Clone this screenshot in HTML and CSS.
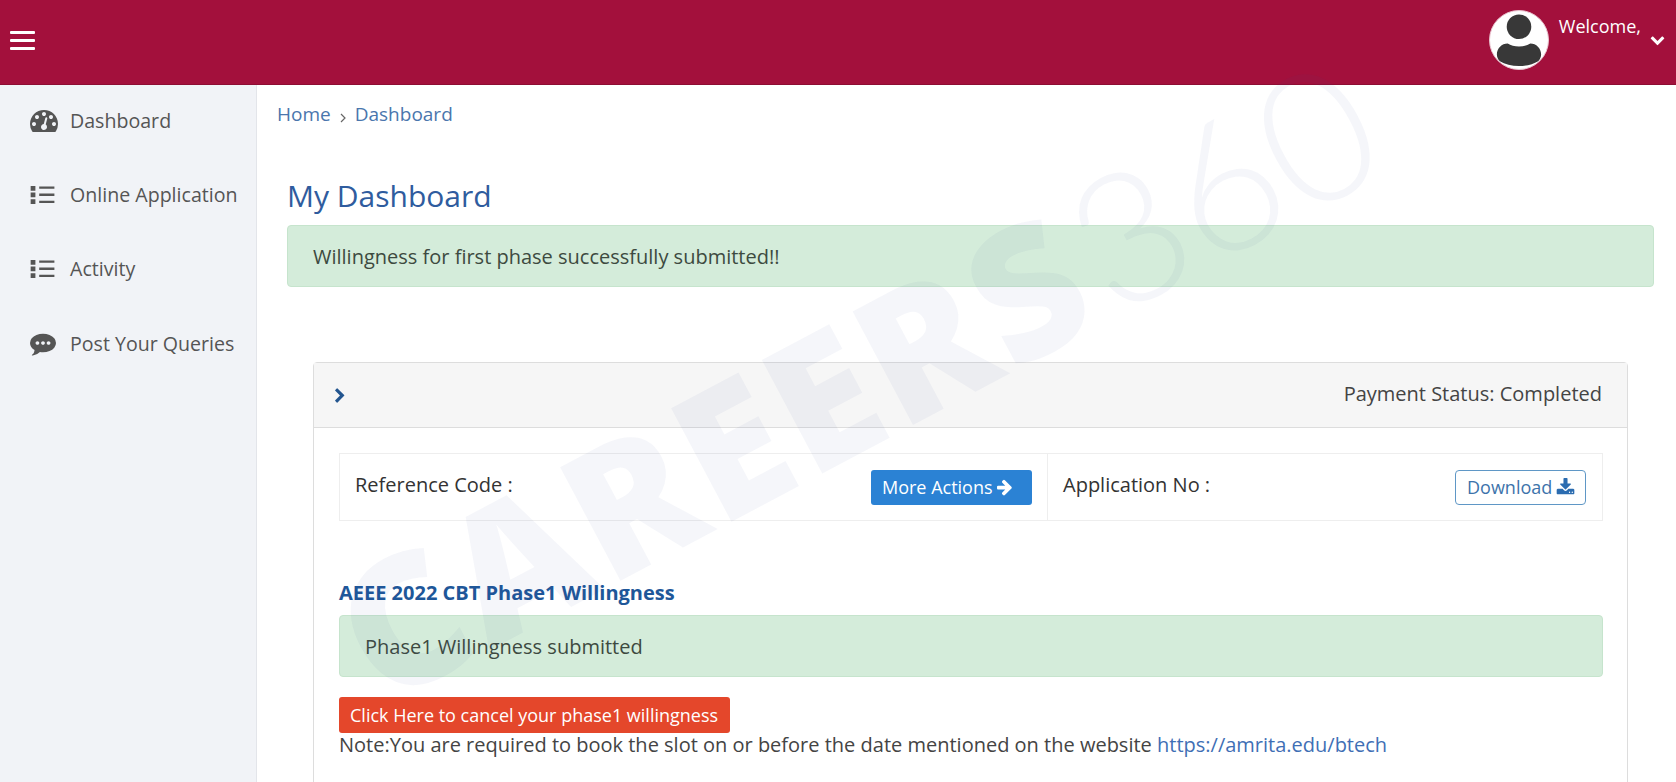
FILE: index.html
```html
<!DOCTYPE html>
<html lang="en">
<head>
<meta charset="utf-8">
<title>My Dashboard</title>
<link rel="stylesheet" href="styles.css">
</head>
<body>
<div class="page">
  <header class="topbar">
    <div class="burger"><span></span><span></span><span></span></div>
    <div class="user">
      <div class="avatar">
        <svg viewBox="0 0 59 59" width="58" height="58"><circle cx="29.500" cy="16" r="12.500" fill="#383838"/><path d="M7 44c0-6 5-11 11-11 3 2 7 3 11.500 3s8.500-1 11.500-3c6 0 11 5 11 11 0 3-1 5-3 7-5 3-12 5-19.500 5s-14.500-2-19.500-5c-2-2-3-4-3-7z" fill="#383838"/></svg>
      </div>
      <span class="welcome">Welcome,</span>
      <svg class="caret" viewBox="0 0 1792 1792" width="15" height="15"><path fill="#fff" d="M1683 808l-742 741q-19 19-45 19t-45-19l-742-741q-19-19-19-45.500t19-45.500l166-165q19-19 45-19t45 19l531 531 531-531q19-19 45-19t45 19l166 165q19 19 19 45.500t-19 45.500z"/></svg>
    </div>
  </header>
  <div class="layout">
    <nav class="sidebar">
      <a class="nav-item">
        <svg class="nav-icon icon-gauge" viewBox="0 0 1792 1792" width="28" height="28"><path d="M384 1152q0-53-37.500-90.500t-90.500-37.500-90.500 37.500-37.500 90.500 37.500 90.500 90.500 37.500 90.500-37.500 37.500-90.500zm192-448q0-53-37.500-90.500t-90.500-37.500-90.500 37.500-37.500 90.500 37.500 90.500 90.500 37.500 90.500-37.500 37.500-90.500zm428 481l101-382q6-26-7.500-48.500t-38.500-29.500-48 6.500-30 39.500l-101 382q-60 5-107 43.500t-63 98.500q-20 77 20 146t117 89 146-20 89-117q16-60-6-117t-72-91zm660-33q0-53-37.500-90.500t-90.500-37.500-90.500 37.500-37.500 90.500 37.500 90.500 90.500 37.500 90.500-37.500 37.500-90.500zm-640-640q0-53-37.500-90.500t-90.500-37.500-90.500 37.500-37.500 90.500 37.500 90.500 90.500 37.500 90.500-37.500 37.500-90.500zm448 192q0-53-37.500-90.500t-90.500-37.500-90.500 37.500-37.500 90.500 37.500 90.500 90.500 37.500 90.500-37.500 37.500-90.500zm320 448q0 261-141 483-19 29-54 29h-1402q-35 0-54-29-141-221-141-483 0-182 71-348t191-286 286-191 348-71 348 71 286 191 191 286 71 348z"/></svg>
        <span>Dashboard</span>
      </a>
      <a class="nav-item">
        <svg class="nav-icon" viewBox="0 0 26 20" width="26" height="19"><path d="M0 1h5v5H0zM0 8h5v5H0zM0 15h5v5H0zM9 1.500h16v2.500H9zM9 9h16v2.500H9zM9 16.500h16V19H9z"/></svg>
        <span>Online Application</span>
      </a>
      <a class="nav-item">
        <svg class="nav-icon" viewBox="0 0 26 20" width="26" height="19"><path d="M0 1h5v5H0zM0 8h5v5H0zM0 15h5v5H0zM9 1.500h16v2.500H9zM9 9h16v2.500H9zM9 16.500h16V19H9z"/></svg>
        <span>Activity</span>
      </a>
      <a class="nav-item">
        <svg class="nav-icon" viewBox="0 0 1792 1792" width="26" height="26"><path d="M640 896q0-53-37.500-90.500t-90.500-37.500-90.500 37.500-37.500 90.500 37.500 90.500 90.500 37.500 90.500-37.500 37.500-90.500zm384 0q0-53-37.500-90.500t-90.500-37.500-90.500 37.500-37.500 90.500 37.500 90.500 90.500 37.500 90.500-37.500 37.500-90.500zm384 0q0-53-37.500-90.500t-90.500-37.500-90.500 37.500-37.500 90.500 37.500 90.500 90.500 37.500 90.500-37.500 37.500-90.500zm384 0q0 174-120 321.500t-326 233-450 85.500q-110 0-211-18-173 173-435 229-52 10-86 13-12 1-22-6t-13-18q-4-15 20-37 5-5 23.500-21.500t25.500-23.500 23.500-25.500 24-31.500 20.500-37 20-48 14.500-57.500 12.500-72.500q-146-90-229.500-216.500t-83.500-269.500q0-174 120-321.500t326-233 450-85.500 450 85.500 326 233 120 321.500z"/></svg>
        <span>Post Your Queries</span>
      </a>
    </nav>
    <main class="main">
      <div class="breadcrumb">
        <a>Home</a>
        <svg class="crumb-sep" viewBox="0 0 8 12" width="8" height="12"><path d="M2 2l4 4-4 4" fill="none" stroke="#666" stroke-width="1.200"/></svg>
        <a>Dashboard</a>
      </div>
      <h1 class="page-title">My Dashboard</h1>
      <div class="alert alert-top">Willingness for first phase successfully submitted!!</div>
      <section class="card">
        <div class="card-head">
          <svg class="chevron" viewBox="0 0 1792 1792" width="16" height="16"><path fill="#23558f" d="M1363 877l-742 742q-19 19-45 19t-45-19l-166-166q-19-19-19-45t19-45l531-531-531-531q-19-19-19-45t19-45l166-166q19-19 45-19t45 19l742 742q19 19 19 45t-19 45z"/></svg>
          <span>Payment Status: Completed</span>
        </div>
        <div class="card-body">
          <div class="info-table">
            <div class="info-cell info-left">
              <span>Reference Code :</span>
              <a class="btn btn-blue">More Actions
                <svg viewBox="0 0 1792 1792" width="18" height="18"><path fill="#fff" d="M1472 960q0 54-37 91l-651 651q-39 37-91 37-51 0-90-37l-75-75q-38-38-38-91t38-91l293-293h-704q-52 0-84.500-37.500t-32.500-90.500v-128q0-53 32.500-90.500t84.500-37.500h704l-293-294q-38-36-38-90t38-90l75-75q38-38 90-38 53 0 91 38l651 651q37 35 37 90z"/></svg>
              </a>
            </div>
            <div class="info-cell info-right">
              <span>Application No :</span>
              <a class="btn btn-outline">Download
                <svg viewBox="0 0 1792 1792" width="19" height="19"><path fill="#2b6cb0" d="M1344 1344q0-26-19-45t-45-19-45 19-19 45 19 45 45 19 45-19 19-45zm256 0q0-26-19-45t-45-19-45 19-19 45 19 45 45 19 45-19 19-45zm128-224v320q0 40-28 68t-68 28h-1472q-40 0-68-28t-28-68v-320q0-40 28-68t68-28h465l135 136q58 56 136 56t136-56l136-136h464q40 0 68 28t28 68zm-325-569q17 41-14 70l-448 448q-18 19-45 19t-45-19l-448-448q-31-29-14-70 17-39 59-39h256v-448q0-26 19-45t45-19h256q26 0 45 19t19 45v448h256q42 0 59 39z"/></svg>
              </a>
            </div>
          </div>
          <h2 class="section-title">AEEE 2022 CBT Phase1 Willingness</h2>
          <div class="alert alert-inner">Phase1 Willingness submitted</div>
          <a class="btn btn-red">Click Here to cancel your phase1 willingness</a>
          <p class="note">Note:You are required to book the slot on or before the date mentioned on the website <a href="#">https://amrita.edu/btech</a></p>
        </div>
      </section>
      <div class="watermark"><span class="wm-bold">CAREERS</span><span class="wm-thin">360</span></div>
    </main>
  </div>
</div>
</body>
</html>
```
FILE: styles.css
```css
* { box-sizing: border-box; }
html, body { margin: 0; padding: 0; }
body {
  font-family: "Open Sans", "Noto Sans", sans-serif;
  font-size: 20px;
  color: #444;
  background: #fff;
}
a { text-decoration: none; }
.page {
  height: 100vh;
  display: flex;
  flex-direction: column;
  overflow: hidden;
}
.topbar {
  flex: 0 0 85px;
  background: #a3103c;
  border-bottom: 1px solid #8d0d33;
  display: flex;
  justify-content: space-between;
  padding: 10px 11px 0 10px;
}
.burger {
  width: 25px;
  margin-top: 21px;
  display: flex;
  flex-direction: column;
  gap: 5.500px;
}
.burger span {
  display: block;
  height: 2.500px;
  background: #fff;
  border-radius: 1px;
}
.user { display: flex; align-items: flex-start; }
.avatar {
  width: 60px;
  height: 60px;
  border-radius: 50%;
  background: #fff;
  border: 1px solid #e9c3cf;
  overflow: hidden;
}
.avatar svg { display: block; }
.welcome {
  margin: 5px 0 0 10px;
  color: #fff;
  font-size: 18px;
  font-weight: 500;
  line-height: 22px;
}
.caret { margin: 22px 0 0 9px; }
.layout { flex: 1; display: flex; min-height: 0; }
.sidebar {
  flex: 0 0 257px;
  background: #f1f3f7;
  border-right: 1px solid #e3e5ea;
  display: flex;
  flex-direction: column;
}
.nav-item {
  height: 74.300px;
  display: flex;
  align-items: center;
  color: #555;
  font-size: 19.600px;
  padding: 0 0 4px 30px;
}
.nav-icon { fill: #555; flex: 0 0 auto; margin-right: 14px; }
.icon-gauge { margin-right: 12px; }
.nav-item span { white-space: nowrap; }
.main {
  flex: 1;
  position: relative;
  padding: 0 22px 0 30px;
  min-width: 0;
}
.breadcrumb {
  margin: 14px 0 0 -10px;
  display: flex;
  align-items: center;
  gap: 8px;
  font-size: 19px;
  line-height: 30px;
  color: #4a76ad;
}
.crumb-sep { margin-top: 8px; }
.page-title {
  margin: 47px 0 0 0;
  font-size: 30px;
  font-weight: 400;
  line-height: 39px;
  color: #2f5c9e;
}
.alert {
  background: #d4ecda;
  border: 1px solid #c6e4cd;
  border-radius: 4px;
  color: #3d4a40;
  font-size: 20px;
  display: flex;
  align-items: center;
  height: 62px;
}
.alert-top { margin-top: 10px; padding-left: 25px; }
.card {
  margin: 75px 26px 0 26px;
  border: 1px solid #ddd;
  border-radius: 4px;
  height: 600px;
}
.card-head {
  height: 65px;
  background: #f6f6f6;
  border-bottom: 1px solid #ddd;
  display: flex;
  align-items: center;
  justify-content: space-between;
  padding: 0 25px 4px 18px;
  color: #444;
}
.chevron { margin-top: 6px; }
.card-body { padding: 25px 24px 0 25px; }
.info-table {
  height: 68px;
  display: flex;
  border: 1px solid #eee;
}
.info-cell {
  display: flex;
  align-items: center;
  justify-content: space-between;
  color: #333;
  padding-bottom: 6px;
}
.info-left { width: 708px; padding-left: 15px; padding-right: 15px; border-right: 1px solid #eee; }
.info-right { flex: 1; padding-left: 15px; padding-right: 16px; }
.btn {
  display: inline-flex;
  align-items: center;
  border-radius: 3px;
  font-size: 18px;
  line-height: 1;
}
.info-cell .btn { margin-top: 6px; height: 35px; }
.btn svg { margin-left: 4px; }
.btn-blue { width: 161px; padding-left: 11px; background: #2b82d4; color: #fff; }
.btn-outline { width: 131px; padding-left: 11px; border: 1px solid #5f97c6; border-radius: 4px; color: #3d73ab; background: #fff; }
.section-title {
  margin: 58px 0 0 0;
  font-size: 20px;
  font-weight: 700;
  line-height: 27px;
  color: #1e5799;
}
.alert-inner { margin-top: 9px; padding-left: 25px; }
.btn-red {
  margin-top: 20px;
  height: 36px;
  width: 391px;
  padding: 0 11px;
  background: #e4472b;
  color: #fff;
}
.note {
  margin: 0;
  line-height: 24px;
  color: #444;
}
.note a { color: #3f6fb5; }
.watermark {
  position: absolute;
  left: 50px;
  top: 480px;
  pointer-events: none;
  white-space: nowrap;
  transform-origin: 0 0;
  transform: rotate(-28deg);
  color: rgba(50, 70, 150, 0.05);
  display: flex;
  align-items: baseline;
}
.wm-bold { font-family: "Open Sans", sans-serif; font-weight: 800; font-size: 180px; line-height: 1; letter-spacing: 4px; }
.wm-thin { font-family: "Lato", sans-serif; font-weight: 300; font-size: 182px; line-height: 1; margin-left: 8px; }
```
